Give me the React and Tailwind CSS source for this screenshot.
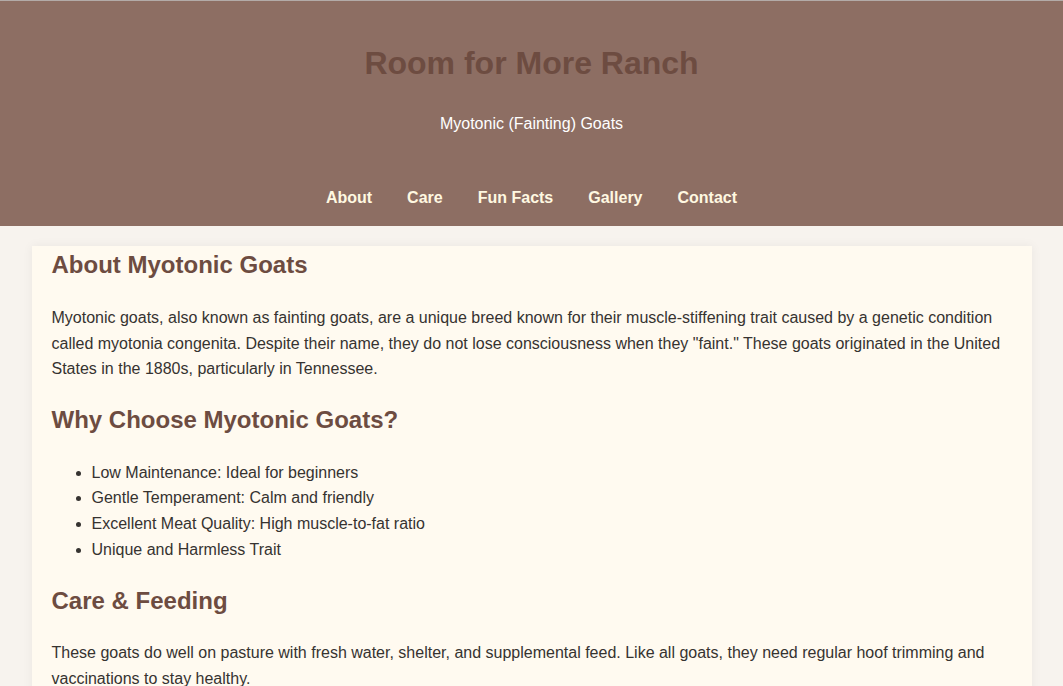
export default function App() {
    const reasons = [
        "Low Maintenance: Ideal for beginners",
        "Gentle Temperament: Calm and friendly",
        "Excellent Meat Quality: High muscle-to-fat ratio",
        "Unique and Harmless Trait",
    ];

    return (
        <div className="min-h-screen bg-[#f7f3ee] font-['Liberation_Sans',Arial,sans-serif] text-[#363330]">
            {/* Header */}
            <header className="border-t border-[#b3aba8] bg-[#8d6e63] pt-[44px] pb-[19px] text-center">
                <h1 className="text-[32px] leading-[37px] font-bold text-[#6d4c41]">Room for More Ranch</h1>
                <p className="mt-[33px] text-[16px] leading-[18px] text-white">Myotonic (Fainting) Goats</p>
                <nav className="mt-[56px] flex justify-center gap-[35px] text-[16px] leading-[18px] font-bold text-[#fff8e1]">
                    <a href="#about">About</a>
                    <a href="#care">Care</a>
                    <a href="#facts">Fun Facts</a>
                    <a href="#gallery">Gallery</a>
                    <a href="#contact">Contact</a>
                </nav>
            </header>

            {/* Content */}
            <main className="mx-auto mt-[20px] max-w-[1000px] bg-[#fffaf0] px-[20px] pt-[5px] pb-[20px] shadow-[0_0_10px_rgba(0,0,0,0.06)]">
                <h2 className="text-[24px] leading-[28px] font-bold text-[#6d4c41]">About Myotonic Goats</h2>
                <p className="mt-[26px] text-[16px] leading-[25.6px]">
                    Myotonic goats, also known as fainting goats, are a unique breed known for their muscle-stiffening trait caused by a genetic condition called myotonia congenita. Despite their name, they do not lose consciousness when they "faint." These goats originated in the United States in the 1880s, particularly in Tennessee.
                </p>

                <h2 className="mt-[24px] text-[24px] leading-[28px] font-bold text-[#6d4c41]">Why Choose Myotonic Goats?</h2>
                <ul className="mt-[26px] list-disc pl-[40px] text-[16px] leading-[25.6px]">
                    {reasons.map((r, i) => (
                        <li key={i}>{r}</li>
                    ))}
                </ul>

                <h2 className="mt-[25px] text-[24px] leading-[28px] font-bold text-[#6d4c41]">Care &amp; Feeding</h2>
                <p className="mt-[25px] text-[16px] leading-[25.6px]">
                    These goats do well on pasture with fresh water, shelter, and supplemental feed. Like all goats, they need regular hoof trimming and vaccinations to stay healthy.
                </p>
            </main>
        </div>
    );
}
